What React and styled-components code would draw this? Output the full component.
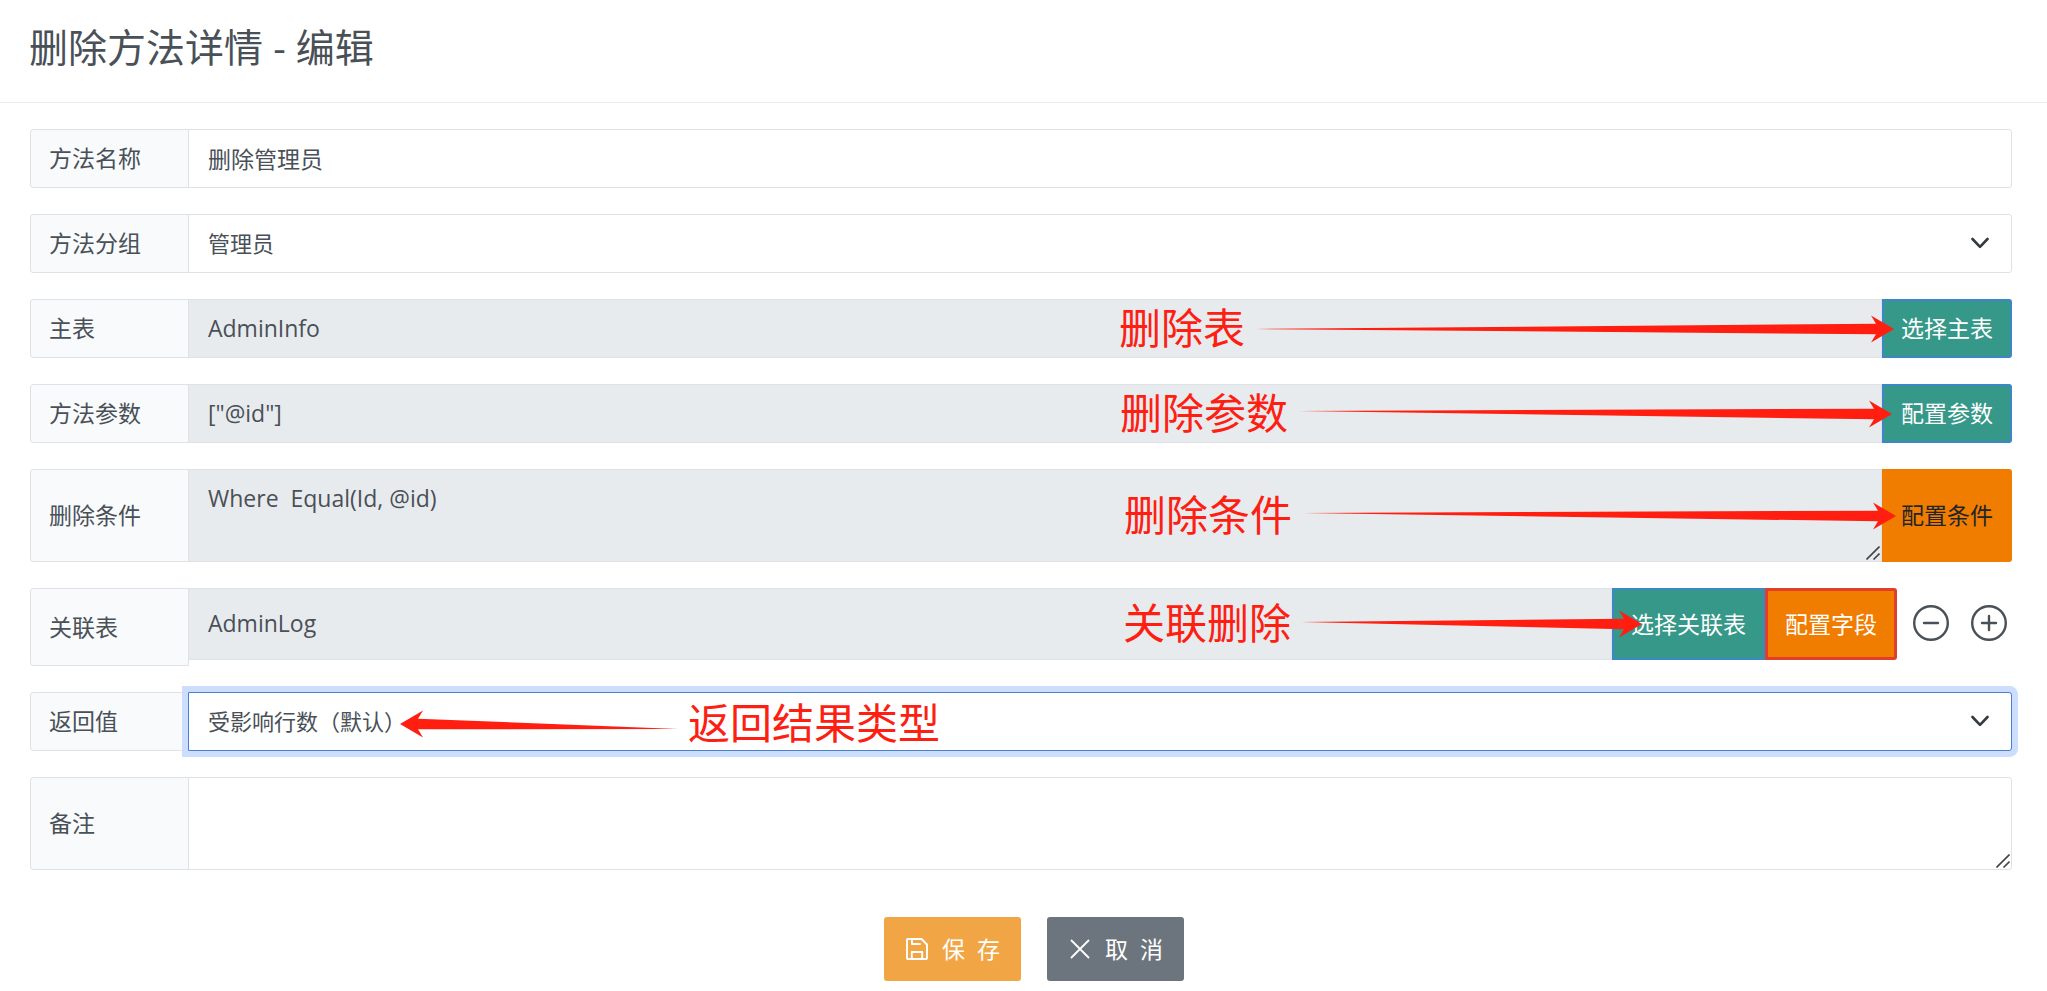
import React, { useState } from "react";
import styled, { createGlobalStyle, css } from "styled-components";

const GlobalStyle = createGlobalStyle`
  * {
    box-sizing: border-box;
  }
  body {
    margin: 0;
    background: #fff;
    color: #495057;
    font-family: "Open Sans", "Noto Sans CJK SC", sans-serif;
    font-size: 23px;
    line-height: 33px;
  }
  input, select, textarea, button {
    font: inherit;
    color: inherit;
  }
`;

const PageHeader = styled.header`
  display: flex;
  align-items: center;
  height: 103px;
  padding: 0 29px 8px;
  border-bottom: 1px solid #e9ecef;
`;

const Title = styled.h1`
  margin: 0;
  font-size: 39px;
  font-weight: 400;
  line-height: 58px;
`;

const Form = styled.form`
  display: flex;
  flex-direction: column;
  gap: 26px;
  padding: 26px 35px 0 30px;
`;

const Row = styled.div`
  position: relative;
  display: flex;
  align-items: ${(props) => (props.$top ? "flex-start" : "stretch")};
  min-height: 59px;
`;

const Label = styled.label`
  display: flex;
  align-items: center;
  flex: none;
  width: 159px;
  min-height: ${(props) => (props.$tall ? "78px" : "59px")};
  padding: 0 18px;
  background: #f8fafc;
  border: 1px solid #dee2e6;
  border-radius: 3px 0 0 3px;
`;

const fieldStyle = css`
  display: block;
  width: 100%;
  background: ${(props) => (props.readOnly ? "#e8ebee" : "#fff")};
  border: 1px solid #dee2e6;
  border-radius: ${(props) => (props.readOnly ? "0" : "0 3px 3px 0")};
  outline: none;
`;

const FieldBox = styled.div`
  position: relative;
  flex: 1;
  min-width: 0;
  margin-left: -1px;
`;

const Input = styled.input`
  ${fieldStyle}
  height: ${(props) => (props.$tall ? "72px" : "59px")};
  padding: 0 19px 2px;
`;

const Select = styled.select`
  ${fieldStyle}
  height: 59px;
  padding: 0 19px;
  font-size: 22px;
  appearance: none;
  ${(props) =>
    props.$active &&
    css`
      border-color: #4a7fcb;
      box-shadow: 0 0 0 6px #cdddfd;
    `}
`;

const Textarea = styled.textarea`
  ${fieldStyle}
  height: 93px;
  padding: 12px 19px;
  resize: none;
`;

const Chevron = styled.svg`
  position: absolute;
  top: 20px;
  right: 23px;
  width: 18px;
  height: 18px;
  pointer-events: none;
`;

const Grip = styled.svg`
  position: absolute;
  right: 2px;
  bottom: 2px;
  width: 14px;
  height: 14px;
  pointer-events: none;
`;

const variants = {
  green: css`
    background: #359888;
    border: 2px solid #3d86c8;
    color: #fff;
  `,
  orange: css`
    background: #f17d00;
    border: 2px solid #f17d00;
    color: #212529;
  `,
  danger: css`
    background: #f17d00;
    border: 3px solid #e03f2d;
    color: #fff;
  `,
};

const AddonButton = styled.button`
  flex: none;
  min-width: 130px;
  height: ${(props) => (props.$tall ? "72px" : "auto")};
  padding: 0 17px;
  border-radius: ${(props) => (props.$last ? "0 3px 3px 0" : "0")};
  white-space: nowrap;
  cursor: pointer;
  ${(props) => variants[props.$variant]}
`;

const RoundButton = styled.button`
  display: flex;
  align-items: center;
  justify-content: center;
  flex: none;
  width: 58px;
  height: 70px;
  padding: 0;
  background: none;
  border: 0;
  cursor: pointer;
`;

const RoundButtons = styled.div`
  display: flex;
  margin-left: 5px;
  margin-right: -6px;
`;

/* red hint that lies over a row and points at one of its controls */
const NoteBox = styled.div`
  position: absolute;
  top: 0;
  height: ${(props) => (props.$tall ? "72px" : "100%")};
  display: flex;
  align-items: center;
  gap: 10px;
  color: #fd2012;
  font-size: 42px;
  line-height: 42px;
  white-space: nowrap;
  pointer-events: none;
  ${(props) =>
    props.$left
      ? css`
          left: ${props.$left}px;
          flex-direction: row-reverse;
          padding-top: 4px;
        `
      : css`
          right: ${props.$right}px;
        `}
`;

const NoteText = styled.span`
  padding-bottom: 2px;
`;

const Actions = styled.div`
  display: flex;
  justify-content: center;
  margin-top: 21px;
`;

const ActionButton = styled.button`
  display: flex;
  align-items: center;
  gap: 14px;
  height: 64px;
  margin-left: 26px;
  padding: 0 21px 0 22px;
  background: ${(props) => (props.$primary ? "#f1a545" : "#6c757d")};
  border: 0;
  border-radius: 3px;
  color: #fff;
  white-space: pre;
  cursor: pointer;
`;

const Arrow = ({ length, rise = 0, flip }) => {
  const tail = 14 - rise;
  const d = `M0 ${tail} L${length - 18} 8.7 L${length - 23} 0.5 L${length} 14 L${length - 23} 27.5 L${length - 18} 19.3 Z`;
  return (
    <svg width={length} height="28" aria-hidden="true">
      <path d={d} fill="#ff1e0f" transform={flip ? `matrix(-1 0 0 1 ${length} 0)` : undefined} />
    </svg>
  );
};

const Note = ({ text, left, right, tall, ...arrow }) => (
  <NoteBox $left={left} $right={right} $tall={tall}>
    <NoteText>{text}</NoteText>
    <Arrow {...arrow} flip={Boolean(left)} />
  </NoteBox>
);

const SelectField = ({ children, ...rest }) => (
  <FieldBox>
    <Select {...rest}>{children}</Select>
    <Chevron viewBox="0 0 18 18" aria-hidden="true">
      <path d="M1.5 5 L9 12.8 L16.5 5" fill="none" stroke="#343a40" strokeWidth="2.6" strokeLinecap="round" strokeLinejoin="round" />
    </Chevron>
  </FieldBox>
);

const TextareaField = (props) => (
  <FieldBox>
    <Textarea {...props} />
    <Grip viewBox="0 0 14 14" aria-hidden="true">
      <path d="M0.5 13.5 L13.5 0.5 M7.5 13.5 L13.5 7.5" stroke="#444" strokeWidth="1.6" />
    </Grip>
  </FieldBox>
);

const CircleIcon = ({ plus }) => (
  <svg width="38" height="38" viewBox="0 0 38 38" fill="none" stroke="#495057" strokeWidth="2.4" strokeLinecap="round" aria-hidden="true">
    <circle cx="19" cy="19" r="16.8" />
    <path d={plus ? "M12 19 H26 M19 12 V26" : "M12 19 H26"} />
  </svg>
);

const SaveIcon = () => (
  <svg width="22" height="22" viewBox="0 0 22 22" fill="none" stroke="currentColor" strokeWidth="1.9" strokeLinejoin="round" strokeLinecap="round" aria-hidden="true">
    <path d="M2 1 H15.5 L21 6.5 V20 Q21 21 20 21 H2 Q1 21 1 20 V2 Q1 1 2 1 Z" />
    <path d="M6 1 V6 H14" />
    <path d="M5.8 21 V14 H16.2 V21" />
  </svg>
);

const CloseIcon = () => (
  <svg width="22" height="22" viewBox="0 0 22 22" fill="none" stroke="currentColor" strokeWidth="1.8" strokeLinecap="round" aria-hidden="true">
    <path d="M2.5 2.5 L19.5 19.5 M19.5 2.5 L2.5 19.5" />
  </svg>
);

const App = () => {
  const [name, setName] = useState("删除管理员");
  const [remark, setRemark] = useState("");

  return (
    <>
      <GlobalStyle />
      <PageHeader>
        <Title>删除方法详情 - 编辑</Title>
      </PageHeader>
      <Form onSubmit={(e) => e.preventDefault()}>
        <Row>
          <Label htmlFor="name">方法名称</Label>
          <FieldBox>
            <Input id="name" value={name} onChange={(e) => setName(e.target.value)} />
          </FieldBox>
        </Row>
        <Row>
          <Label htmlFor="group">方法分组</Label>
          <SelectField id="group">
            <option>管理员</option>
          </SelectField>
        </Row>
        <Row>
          <Label htmlFor="table">主表</Label>
          <FieldBox>
            <Input id="table" value="AdminInfo" readOnly />
          </FieldBox>
          <AddonButton type="button" $variant="green" $last>选择主表</AddonButton>
          <Note text="删除表" right={118} length={639} />
        </Row>
        <Row>
          <Label htmlFor="params">方法参数</Label>
          <FieldBox>
            <Input id="params" value={'["@id"]'} readOnly />
          </FieldBox>
          <AddonButton type="button" $variant="green" $last>配置参数</AddonButton>
          <Note text="删除参数" right={120} length={594} rise={3} />
        </Row>
        <Row>
          <Label htmlFor="where">删除条件</Label>
          <TextareaField id="where" value="Where  Equal(Id, @id)" readOnly />
          <AddonButton type="button" $variant="orange" $last>配置条件</AddonButton>
          <Note text="删除条件" right={116} length={594} rise={3} />
        </Row>
        <Row $top>
          <Label htmlFor="relation" $tall>关联表</Label>
          <FieldBox>
            <Input id="relation" value="AdminLog" readOnly $tall />
          </FieldBox>
          <AddonButton type="button" $variant="green" $tall>选择关联表</AddonButton>
          <AddonButton type="button" $variant="danger" $tall $last>配置字段</AddonButton>
          <RoundButtons>
            <RoundButton type="button" aria-label="-">
              <CircleIcon />
            </RoundButton>
            <RoundButton type="button" aria-label="+">
              <CircleIcon plus />
            </RoundButton>
          </RoundButtons>
          <Note text="关联删除" right={370} length={341} rise={2} tall />
        </Row>
        <Row>
          <Label htmlFor="result">返回值</Label>
          <SelectField id="result" $active>
            <option>受影响行数（默认）</option>
          </SelectField>
          <Note text="返回结果类型" left={370} length={278} rise={-5} />
        </Row>
        <Row>
          <Label htmlFor="remark">备注</Label>
          <TextareaField id="remark" value={remark} onChange={(e) => setRemark(e.target.value)} />
        </Row>
        <Actions>
          <ActionButton type="submit" $primary>
            <SaveIcon />
            <span>保  存</span>
          </ActionButton>
          <ActionButton type="button">
            <CloseIcon />
            <span>取  消</span>
          </ActionButton>
        </Actions>
      </Form>
    </>
  );
};

export default App;
